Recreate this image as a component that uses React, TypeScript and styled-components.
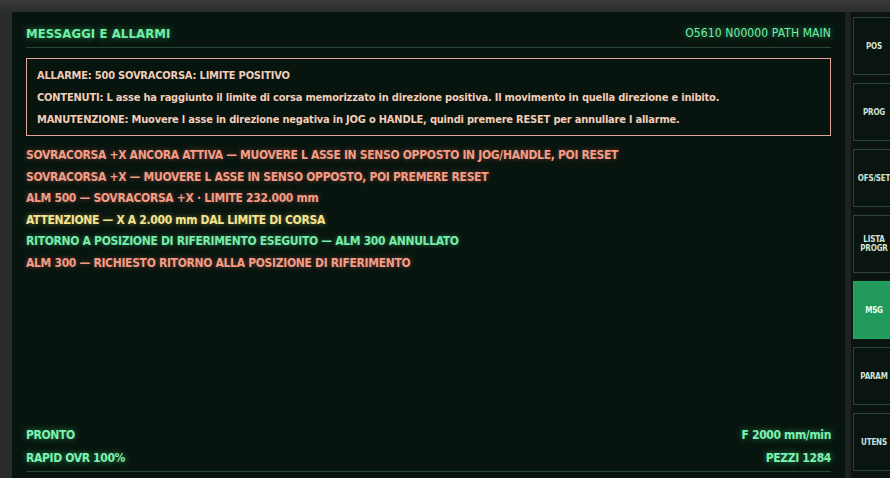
import React from "react";
import styled, { createGlobalStyle } from "styled-components";

const GlobalStyle = createGlobalStyle`
  html, body {
    margin: 0;
    padding: 0;
    height: 100%;
    overflow: hidden;
    background: #2a2c2c;
  }
  #root {
    height: 100%;
  }
  * {
    box-sizing: border-box;
  }
`;

const FONT = `"DejaVu Sans Condensed", "Liberation Sans Narrow", "Liberation Sans", sans-serif`;

const Screen = styled.div`
  display: flex;
  height: 100vh;
  width: 100vw;
  padding: 12px 0 0 12px;
  background: linear-gradient(180deg, #3a3c3c 0px, #2b2d2d 12px, #2a2c2c 100%);
  font-family: ${FONT};
  overflow: hidden;
`;

const Panel = styled.main`
  flex: 0 0 833px;
  display: flex;
  flex-direction: column;
  background: #08150f;
  padding: 0 14px 6px 14px;
`;

const Header = styled.header`
  display: flex;
  justify-content: space-between;
  align-items: center;
  height: 36px;
  padding-top: 7px;
  border-bottom: 1px solid #28453a;
`;

const HeaderTitle = styled.div<{ $size?: number; $weight?: number }>`
  color: #6ef0a6;
  font-size: ${(p) => p.$size ?? 13}px;
  font-weight: ${(p) => p.$weight ?? 700};
  letter-spacing: 0.1px;
  text-shadow: 0 0 6px rgba(90, 240, 150, 0.55);
`;

const AlarmBox = styled.section`
  margin-top: 10px;
  border: 1px solid #e2a596;
  padding: 6px 10px 4px;
`;

const AlarmLine = styled.div`
  color: #f2cdb8;
  font-size: 11px;
  font-weight: 700;
  letter-spacing: -0.2px;
  line-height: 22px;
  white-space: nowrap;
`;

const MessageList = styled.div`
  flex: 1;
  margin-top: 9px;
`;

const tones = {
  alarm: { color: "#f49c86", glow: "rgba(240, 120, 100, 0.45)" },
  warn: { color: "#f4e490", glow: "rgba(240, 220, 120, 0.45)" },
  ok: { color: "#76eca8", glow: "rgba(90, 230, 150, 0.45)" },
};

type Tone = keyof typeof tones;

const Message = styled.div<{ $tone: Tone }>`
  color: ${(p) => tones[p.$tone].color};
  text-shadow: 0 0 5px ${(p) => tones[p.$tone].glow};
  font-size: 12px;
  font-weight: 700;
  letter-spacing: -0.32px;
  line-height: 21.6px;
  white-space: nowrap;
`;

const Footer = styled.footer`
  display: grid;
  grid-template-columns: 1fr auto;
  border-bottom: 1px solid #28453a;
  padding-bottom: 1px;
`;

const FooterCell = styled.div<{ $right?: boolean }>`
  color: #7af2b0;
  text-shadow: 0 0 6px rgba(90, 240, 150, 0.55);
  font-size: 12px;
  font-weight: 700;
  letter-spacing: -0.35px;
  line-height: 23px;
  text-align: ${(p) => (p.$right ? "right" : "left")};
`;

const Divider = styled.div`
  flex: 0 0 6px;
  background: #1f2222;
`;

const Sidebar = styled.nav`
  flex: 0 0 45px;
  display: flex;
  flex-direction: column;
  gap: 8px;
  padding: 5px 0 0 2px;
  background: #0c1411;
`;

const SideButton = styled.button<{ $active?: boolean }>`
  height: 58px;
  width: 42px;
  display: flex;
  align-items: center;
  justify-content: center;
  padding: 0;
  border: 1px solid ${(p) => (p.$active ? "#25a862" : "#2a4638")};
  background: ${(p) => (p.$active ? "#21995a" : "#0a1410")};
  color: ${(p) => (p.$active ? "#e6fff0" : "#cfe3d6")};
  font-family: ${FONT};
  font-size: 8px;
  font-weight: 700;
  letter-spacing: -0.2px;
  line-height: 9px;
  text-align: center;
  white-space: pre-line;
`;

const messages: { text: string; tone: Tone }[] = [
  { text: "SOVRACORSA +X ANCORA ATTIVA — MUOVERE L ASSE IN SENSO OPPOSTO IN JOG/HANDLE, POI RESET", tone: "alarm" },
  { text: "SOVRACORSA +X — MUOVERE L ASSE IN SENSO OPPOSTO, POI PREMERE RESET", tone: "alarm" },
  { text: "ALM 500 — SOVRACORSA +X · LIMITE 232.000 mm", tone: "alarm" },
  { text: "ATTENZIONE — X A 2.000 mm DAL LIMITE DI CORSA", tone: "warn" },
  { text: "RITORNO A POSIZIONE DI RIFERIMENTO ESEGUITO — ALM 300 ANNULLATO", tone: "ok" },
  { text: "ALM 300 — RICHIESTO RITORNO ALLA POSIZIONE DI RIFERIMENTO", tone: "alarm" },
];

const softkeys = ["POS", "PROG", "OFS/SET", "LISTA\nPROGR", "MSG", "PARAM", "UTENS"];

export default function App() {
  return (
    <>
      <GlobalStyle />
      <Screen>
        <Panel>
          <Header>
            <HeaderTitle>MESSAGGI E ALLARMI</HeaderTitle>
            <HeaderTitle $size={12} $weight={400}>O5610 N00000 PATH MAIN</HeaderTitle>
          </Header>
          <AlarmBox>
            <AlarmLine>ALLARME: 500 SOVRACORSA: LIMITE POSITIVO</AlarmLine>
            <AlarmLine>
              CONTENUTI: L asse ha raggiunto il limite di corsa memorizzato in direzione positiva. Il movimento in quella direzione e inibito.
            </AlarmLine>
            <AlarmLine>
              MANUTENZIONE: Muovere l asse in direzione negativa in JOG o HANDLE, quindi premere RESET per annullare l allarme.
            </AlarmLine>
          </AlarmBox>
          <MessageList>
            {messages.map((m) => (
              <Message key={m.text} $tone={m.tone}>
                {m.text}
              </Message>
            ))}
          </MessageList>
          <Footer>
            <FooterCell>PRONTO</FooterCell>
            <FooterCell $right>F 2000 mm/min</FooterCell>
            <FooterCell>RAPID OVR 100%</FooterCell>
            <FooterCell $right>PEZZI 1284</FooterCell>
          </Footer>
        </Panel>
        <Divider />
        <Sidebar>
          {softkeys.map((k) => (
            <SideButton key={k} $active={k === "MSG"}>
              {k}
            </SideButton>
          ))}
        </Sidebar>
      </Screen>
    </>
  );
}
